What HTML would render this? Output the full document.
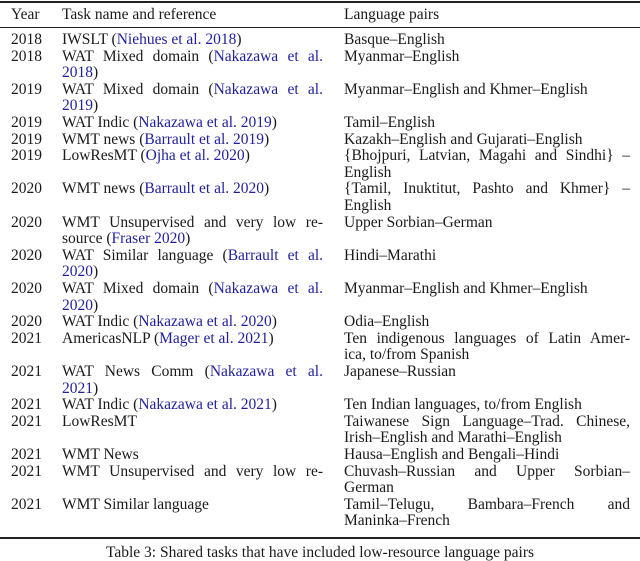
<!DOCTYPE html>
<html><head><meta charset="utf-8"><style>
html,body{margin:0;padding:0;background:#fff;width:640px;height:561px;overflow:hidden;position:relative}
body{font-family:"Liberation Serif","DejaVu Serif",serif;font-size:15.5px;color:#1a1a1a}
.l{position:absolute;height:17px;line-height:17px;white-space:nowrap}
.y{left:11px}
.t{left:62px;width:261px}
.g{left:344px;width:286px}
.j{text-align:justify;text-align-last:justify;white-space:normal}
a{color:#1f1f9c;text-decoration:none}
.r{position:absolute;left:0;width:640px;background:#222}
</style></head><body>
<div class="r" style="top:1px;height:2px"></div>
<div class="l y" style="top:6px">Year</div>
<div class="l t" style="top:6px">Task name and reference</div>
<div class="l g" style="top:6px">Language pairs</div>
<div class="r" style="top:27px;height:1px"></div>

<div class="l y" style="top:31px">2018</div><div class="l t" style="top:31px">IWSLT (<a>Niehues et al. 2018</a>)</div><div class="l g" style="top:31px">Basque–English</div>
<div class="l y" style="top:47.6px">2018</div><div class="l t j" style="top:47.6px">WAT Mixed domain (<a>Nakazawa et al.</a></div><div class="l g" style="top:47.6px">Myanmar–English</div>
<div class="l t" style="top:64.2px"><a>2018</a>)</div>
<div class="l y" style="top:80.8px">2019</div><div class="l t j" style="top:80.8px">WAT Mixed domain (<a>Nakazawa et al.</a></div><div class="l g" style="top:80.8px">Myanmar–English and Khmer–English</div>
<div class="l t" style="top:97.4px"><a>2019</a>)</div>
<div class="l y" style="top:114px">2019</div><div class="l t" style="top:114px">WAT Indic (<a>Nakazawa et al. 2019</a>)</div><div class="l g" style="top:114px">Tamil–English</div>
<div class="l y" style="top:130.6px">2019</div><div class="l t" style="top:130.6px">WMT news (<a>Barrault et al. 2019</a>)</div><div class="l g" style="top:130.6px">Kazakh–English and Gujarati–English</div>
<div class="l y" style="top:147.2px">2019</div><div class="l t" style="top:147.2px">LowResMT (<a>Ojha et al. 2020</a>)</div><div class="l g j" style="top:147.2px">{Bhojpuri, Latvian, Magahi and Sindhi} –</div>
<div class="l g" style="top:163.8px">English</div>
<div class="l y" style="top:180.4px">2020</div><div class="l t" style="top:180.4px">WMT news (<a>Barrault et al. 2020</a>)</div><div class="l g j" style="top:180.4px">{Tamil, Inuktitut, Pashto and Khmer} –</div>
<div class="l g" style="top:197px">English</div>
<div class="l y" style="top:213.6px">2020</div><div class="l t j" style="top:213.6px">WMT Unsupervised and very low re-</div><div class="l g" style="top:213.6px">Upper Sorbian–German</div>
<div class="l t" style="top:230.2px">source (<a>Fraser 2020</a>)</div>
<div class="l y" style="top:246.8px">2020</div><div class="l t j" style="top:246.8px">WAT Similar language (<a>Barrault et al.</a></div><div class="l g" style="top:246.8px">Hindi–Marathi</div>
<div class="l t" style="top:263.4px"><a>2020</a>)</div>
<div class="l y" style="top:280px">2020</div><div class="l t j" style="top:280px">WAT Mixed domain (<a>Nakazawa et al.</a></div><div class="l g" style="top:280px">Myanmar–English and Khmer–English</div>
<div class="l t" style="top:296.6px"><a>2020</a>)</div>
<div class="l y" style="top:313.2px">2020</div><div class="l t" style="top:313.2px">WAT Indic (<a>Nakazawa et al. 2020</a>)</div><div class="l g" style="top:313.2px">Odia–English</div>
<div class="l y" style="top:329.8px">2021</div><div class="l t" style="top:329.8px">AmericasNLP (<a>Mager et al. 2021</a>)</div><div class="l g j" style="top:329.8px">Ten indigenous languages of Latin Amer-</div>
<div class="l g" style="top:346.4px">ica, to/from Spanish</div>
<div class="l y" style="top:363px">2021</div><div class="l t j" style="top:363px">WAT News Comm (<a>Nakazawa et al.</a></div><div class="l g" style="top:363px">Japanese–Russian</div>
<div class="l t" style="top:379.6px"><a>2021</a>)</div>
<div class="l y" style="top:396.2px">2021</div><div class="l t" style="top:396.2px">WAT Indic (<a>Nakazawa et al. 2021</a>)</div><div class="l g" style="top:396.2px">Ten Indian languages, to/from English</div>
<div class="l y" style="top:412.8px">2021</div><div class="l t" style="top:412.8px">LowResMT</div><div class="l g j" style="top:412.8px">Taiwanese Sign Language–Trad. Chinese,</div>
<div class="l g" style="top:429.4px">Irish–English and Marathi–English</div>
<div class="l y" style="top:446px">2021</div><div class="l t" style="top:446px">WMT News</div><div class="l g" style="top:446px">Hausa–English and Bengali–Hindi</div>
<div class="l y" style="top:462.6px">2021</div><div class="l t j" style="top:462.6px">WMT Unsupervised and very low re-</div><div class="l g j" style="top:462.6px">Chuvash–Russian and Upper Sorbian–</div>
<div class="l g" style="top:479.2px">German</div>
<div class="l y" style="top:495.8px">2021</div><div class="l t" style="top:495.8px">WMT Similar language</div><div class="l g j" style="top:495.8px">Tamil–Telugu, Bambara–French and</div>
<div class="l g" style="top:512.4px">Maninka–French</div>

<div class="r" style="top:537px;height:2px"></div>
<div class="l" style="top:544px;left:0;width:640px;text-align:center">Table 3: Shared tasks that have included low-resource language pairs</div>
</body></html>
